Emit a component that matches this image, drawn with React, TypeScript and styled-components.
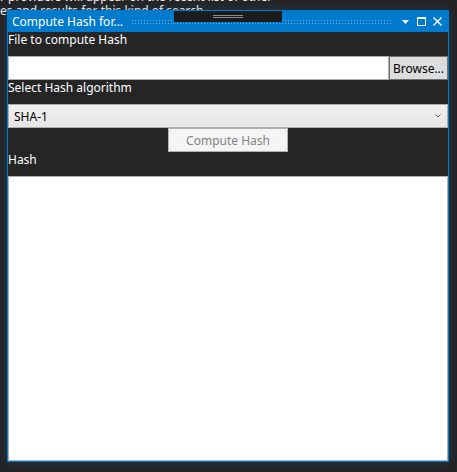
import styled, { createGlobalStyle } from "styled-components";

const GlobalStyle = createGlobalStyle`
  html, body {
    margin: 0;
    padding: 0;
    background: #252526;
  }
  body {
    font-family: "Noto Sans", "Open Sans", sans-serif;
    font-size: 12px;
  }
`;

const Desktop = styled.div`
  position: relative;
  width: 457px;
  height: 472px;
  overflow: hidden;
  background: #252526;
`;

// text of the page lying behind the floating tool window
const BehindText = styled.div`
  margin-top: -10px;
  color: #f1f1f1;
  font-size: 12px;
  line-height: 14px;
  white-space: nowrap;
`;

const ToolWindow = styled.div`
  position: absolute;
  left: 7px;
  top: 10px;
  width: 442px;
  height: 452px;
  box-sizing: border-box;
  border: 1px solid #007acc;
  background: #252526;
  display: flex;
  flex-direction: column;
  box-shadow: 0 0 7px rgba(0, 100, 170, 0.35);
`;

const TitleBar = styled.div`
  height: 21px;
  flex-shrink: 0;
  background: #007acc;
  display: flex;
  align-items: center;
  padding-left: 4px;
`;

const Title = styled.span`
  color: #ffffff;
  font-size: 12px;
  white-space: nowrap;
  margin-right: 8px;
`;

const Grip = styled.div`
  flex: 1;
  height: 6px;
  margin-top: 1px;
  margin-right: 5px;
  background-image: radial-gradient(circle, rgba(190, 225, 250, 0.55) 0.7px, transparent 0.9px);
  background-size: 3px 3px;
`;

const TitleButton = styled.span`
  width: 16px;
  height: 16px;
  display: flex;
  align-items: center;
  justify-content: center;
`;

const TitleButtons = styled.div`
  display: flex;
  padding-right: 3px;
`;

const DockHandle = styled.div`
  position: absolute;
  left: 174px;
  top: 11px;
  width: 108px;
  height: 11px;
  background: #1b1b1c;
  display: flex;
  flex-direction: column;
  align-items: center;
  justify-content: center;
  gap: 1px;
  span {
    display: block;
    width: 30px;
    height: 1px;
    background: #8a8a8a;
  }
`;

const Content = styled.div`
  flex: 1;
  display: flex;
  flex-direction: column;
`;

const FieldLabel = styled.div`
  height: 24px;
  color: #ffffff;
  font-size: 12px;
  line-height: 16px;
`;

const FileRow = styled.div`
  display: flex;
  height: 24px;
`;

const TextInput = styled.div`
  flex: 1;
  box-sizing: border-box;
  background: #ffffff;
  border: 1px solid #abadb3;
`;

const BrowseButton = styled.div`
  width: 59px;
  box-sizing: border-box;
  background: #dddddd;
  border: 1px solid #707070;
  color: #000000;
  font-size: 12px;
  display: flex;
  align-items: center;
  justify-content: center;
`;

const ComboBox = styled.div`
  height: 24px;
  box-sizing: border-box;
  border: 1px solid #acacac;
  background: linear-gradient(#f0f0f0, #e5e5e5);
  display: flex;
  align-items: center;
  justify-content: space-between;
  padding: 0 6px 0 5px;
  color: #000000;
  font-size: 12px;
`;

const ComputeButton = styled.div<{ $disabled?: boolean }>`
  align-self: center;
  width: 120px;
  height: 24px;
  box-sizing: border-box;
  background: ${(p) => (p.$disabled ? "#f4f4f4" : "#dddddd")};
  border: 1px solid ${(p) => (p.$disabled ? "#adb2b5" : "#707070")};
  color: ${(p) => (p.$disabled ? "#838383" : "#000000")};
  font-size: 12px;
  display: flex;
  align-items: center;
  justify-content: center;
`;

const HashBox = styled.div`
  flex: 1;
  box-sizing: border-box;
  background: #ffffff;
  border: 1px solid #abadb3;
`;

function App() {
  return (
    <Desktop>
      <GlobalStyle />
      <BehindText>
        <div>r providers will appear on the recent list of other</div>
        <div>es and results for this kind of search</div>
      </BehindText>
      <ToolWindow>
        <TitleBar>
          <Title>Compute Hash for...</Title>
          <Grip />
          <TitleButtons>
            <TitleButton>
              <svg width="7" height="4" viewBox="0 0 7 4">
                <path d="M0 0 H7 L3.5 4 Z" fill="#ffffff" />
              </svg>
            </TitleButton>
            <TitleButton>
              <svg width="9" height="9" viewBox="0 0 9 9">
                <rect x="0.5" y="0.5" width="8" height="8" fill="none" stroke="#ffffff" />
                <rect x="0" y="0" width="9" height="2" fill="#ffffff" />
              </svg>
            </TitleButton>
            <TitleButton>
              <svg width="9" height="9" viewBox="0 0 9 9">
                <path d="M0.5 0.5 L8.5 8.5 M8.5 0.5 L0.5 8.5" stroke="#ffffff" strokeWidth="1.4" />
              </svg>
            </TitleButton>
          </TitleButtons>
        </TitleBar>
        <Content>
          <FieldLabel>File to compute Hash</FieldLabel>
          <FileRow>
            <TextInput />
            <BrowseButton>Browse...</BrowseButton>
          </FileRow>
          <FieldLabel>Select Hash algorithm</FieldLabel>
          <ComboBox>
            <span>SHA-1</span>
            <svg width="6" height="4" viewBox="0 0 6 4">
              <path d="M0.5 0.5 L3 3 L5.5 0.5" fill="none" stroke="#606060" strokeWidth="1" />
            </svg>
          </ComboBox>
          <ComputeButton $disabled>Compute Hash</ComputeButton>
          <FieldLabel>Hash</FieldLabel>
          <HashBox />
        </Content>
      </ToolWindow>
      <DockHandle>
        <span />
        <span />
      </DockHandle>
    </Desktop>
  );
}

export default App;
